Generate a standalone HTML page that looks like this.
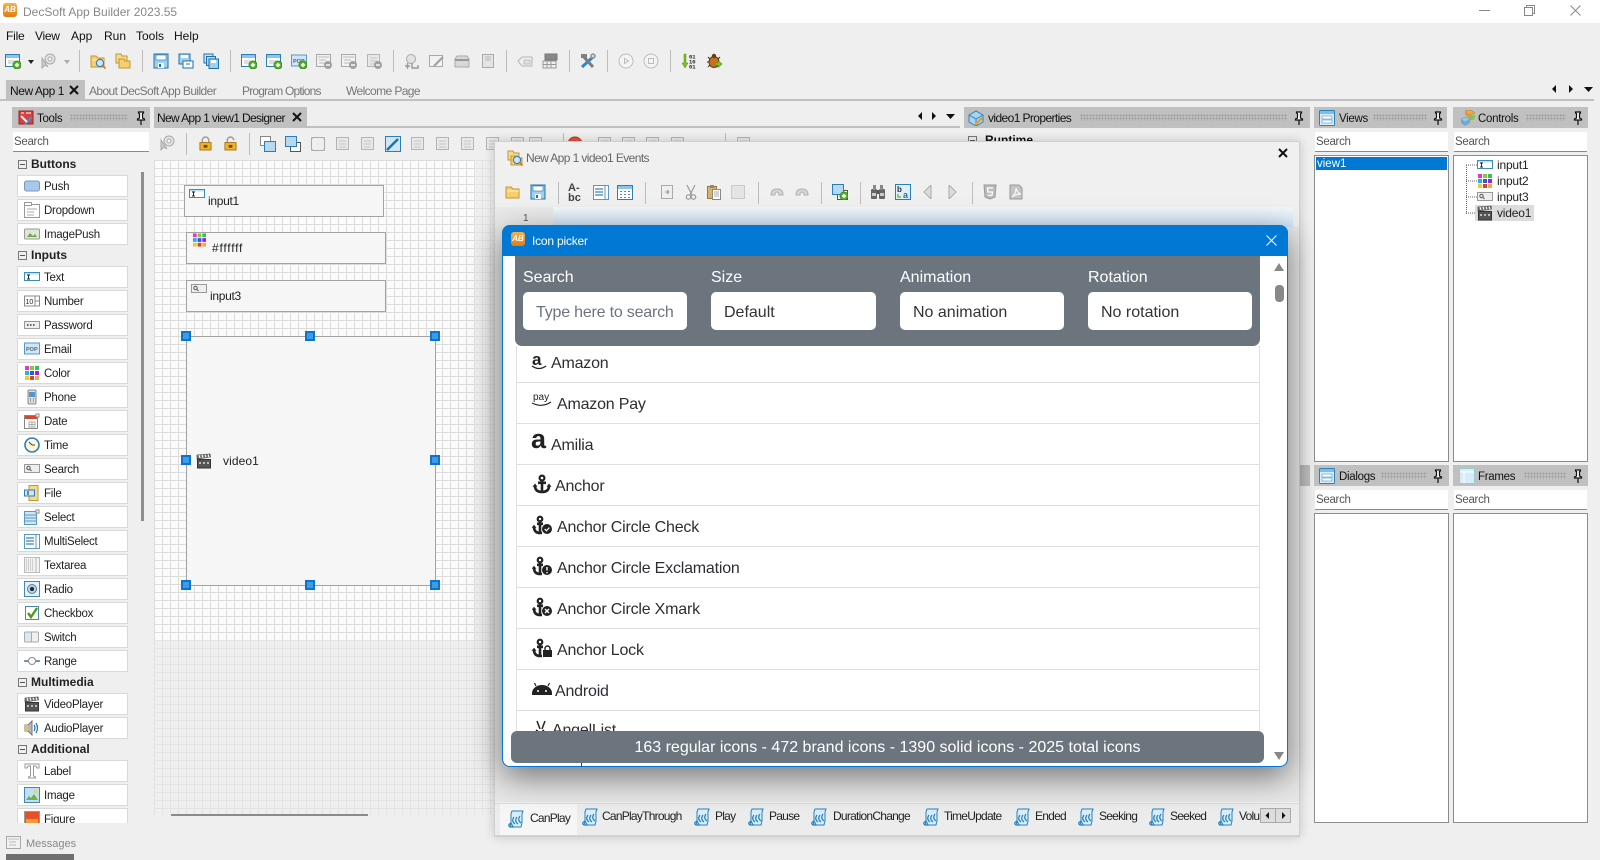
<!DOCTYPE html>
<html><head><meta charset="utf-8"><title>DecSoft App Builder</title>
<style>
html,body{margin:0;padding:0;width:1600px;height:860px;overflow:hidden;background:#efefef;font-family:"Liberation Sans",sans-serif;color:#222}
body{position:relative}
.a{position:absolute}
.t{position:absolute;white-space:nowrap;line-height:14px;font-size:12px}
svg.i{position:absolute;width:16px;height:16px;overflow:visible}
.sep{position:absolute;width:1px;background:#bdbdbd}
.ph{position:absolute;background:#c0c0c0;height:21px}
.ph2{font-size:11.5px;letter-spacing:-.3px;margin-top:1px}
.dots{position:absolute;height:7px;background-image:radial-gradient(#9c9c9c .8px,transparent 1px);background-size:3px 3px}
.search{position:absolute;background:#fff;height:19px;border-bottom:1px solid #8a8a8a;font-size:11.5px;letter-spacing:-.3px;line-height:21px;color:#555;padding-left:1px;box-sizing:content-box}
.box{position:absolute;background:#fff;border:1px solid #8c8c8c;box-sizing:border-box}
.it{position:absolute;left:17px;width:111px;height:22px;background:#fff;border:1px solid #d9d9d9;box-sizing:border-box;font-size:11.5px;line-height:20px}
.it svg{position:absolute;left:6px;top:2px;width:16px;height:16px}
.it span{position:absolute;left:26px;top:1px;letter-spacing:-.25px}
.hd{position:absolute;left:31px;font-weight:bold;font-size:12px;line-height:14px}
.mn{position:absolute;left:18px;width:9px;height:9px;border:1px solid #777;box-sizing:border-box}
.mn:after{content:"";position:absolute;left:1px;top:3px;width:5px;height:1px;background:#555}
.ctl{position:absolute;background:#f6f6f6;border:1px solid #a2a2a2;box-sizing:border-box;font-size:12px}
.hdl{position:absolute;width:10px;height:10px;background:#3f9ae8;border:2px solid #0b74cf;box-sizing:border-box}
.lbl{position:absolute;color:#fff;font-size:16px;line-height:20px;top:268px;white-space:nowrap}
.inp{position:absolute;top:292px;width:164px;height:38px;background:#fff;border-radius:5px;font-size:16px;line-height:42px;box-sizing:border-box;padding-left:13px;color:#333;white-space:nowrap}
.row{position:absolute;left:516px;width:744px;height:41px;border-bottom:1px solid #dfdfdf;box-sizing:border-box;background:#fff;font-size:16px;color:#2b2f33}
.row span{position:absolute;top:12px;line-height:20px;white-space:nowrap;letter-spacing:-.2px}
.row svg{position:absolute;left:16px;top:9px;width:22px;height:20px;overflow:visible}
.ev{position:absolute;top:809px;font-size:12px;line-height:14px;white-space:nowrap;letter-spacing:-.75px}
.evi{position:absolute;top:808px;width:18px;height:18px;overflow:visible}
</style></head><body>
<svg width="0" height="0" style="position:absolute">
<defs>
<symbol id="win" viewBox="0 0 16 16"><rect x=".5" y="1.500" width="14" height="12" fill="#fff" stroke="#2a7fb8"/><rect x="1" y="2" width="13" height="3" fill="#8cc4ea"/><path d="M3 8h7M3 10h7" stroke="#bbb"/></symbol>
<symbol id="plus" viewBox="0 0 16 16"><circle cx="12" cy="12" r="4" fill="#5cb531" stroke="#3a8a1c"/><path d="M10 12h4M12 10v4" stroke="#fff" stroke-width="1.400"/></symbol>
<symbol id="minus" viewBox="0 0 16 16"><circle cx="12" cy="12" r="4" fill="#a0a0a0"/><path d="M10 12h4" stroke="#fff" stroke-width="1.400"/></symbol>
<symbol id="fold" viewBox="0 0 16 16"><path d="M1 3h5l2 2h6v9H1z" fill="#f6cf6e" stroke="#c29635"/><path d="M2 7h12" stroke="#fff0bd"/></symbol>
<symbol id="fold2" viewBox="0 0 16 16"><path d="M1 1h5l1 2h5v7H1z" fill="#f6d98a" stroke="#c29635"/><path d="M4 6h5l1 2h5v7H4z" fill="#f6cf6e" stroke="#c29635"/></symbol>
<symbol id="lens" viewBox="0 0 16 16"><circle cx="10" cy="10" r="3.600" fill="#cfe6f8" stroke="#3c84b8" stroke-width="1.200"/><path d="M12.500 12.500l3 3" stroke="#d07a30" stroke-width="1.800"/></symbol>
<symbol id="save" viewBox="0 0 16 16"><path d="M1 1h14v14H1z" fill="#9fd0f0" stroke="#1d72aa"/><rect x="3" y="2" width="10" height="5" fill="#fff" stroke="#1d72aa" stroke-width=".6"/><rect x="5" y="10" width="6" height="5" fill="#fff"/><rect x="6" y="11" width="2" height="3" fill="#1d72aa"/></symbol>
<symbol id="save2" viewBox="0 0 16 16"><path d="M1 1h11v10H1z" fill="#9fd0f0" stroke="#1d72aa"/><rect x="3" y="2" width="7" height="3" fill="#fff"/><rect x="5" y="8" width="10" height="7" fill="#fff" stroke="#1d72aa"/><path d="M8 11h4" stroke="#1d72aa"/></symbol>
<symbol id="save3" viewBox="0 0 16 16"><rect x="1" y="1" width="9" height="9" fill="#cfe6f8" stroke="#1d72aa"/><rect x="3.500" y="3.500" width="9" height="9" fill="#b3d9f2" stroke="#1d72aa"/><rect x="6" y="6" width="9.500" height="9.500" fill="#9fd0f0" stroke="#1d72aa"/><rect x="8" y="7" width="5" height="3" fill="#fff"/></symbol>
<symbol id="gwin" viewBox="0 0 16 16"><rect x=".5" y="1.500" width="14" height="12" fill="#f2f2f2" stroke="#a8a8a8"/><path d="M2 4h11M3 7h7M3 10h7" stroke="#bcbcbc"/></symbol>
<symbol id="gbox" viewBox="0 0 16 16"><rect x="1.500" y="1.500" width="12" height="12" fill="#e8e8e8" stroke="#b4b4b4"/><path d="M4 5h7M4 8h7M4 11h7" stroke="#c6c6c6"/></symbol>
<symbol id="gdoc" viewBox="0 0 16 16"><rect x=".5" y="2.500" width="13" height="11" fill="#f2f2f2" stroke="#aaa"/><path d="M5 13L14 4" stroke="#a0a0a0" stroke-width="2"/></symbol>
<symbol id="gcase" viewBox="0 0 16 16"><path d="M1 14V6l2-3h10l2 3v8z" fill="#d8d8d8" stroke="#aaa"/><path d="M1 7h14" stroke="#999" stroke-width="2"/></symbol>
<symbol id="gside" viewBox="0 0 16 16"><rect x="2.500" y="1.500" width="11" height="13" fill="#e4e4e4" stroke="#aaa"/><rect x="5" y="3" width="6" height="5" fill="#cfcfcf"/></symbol>
<symbol id="gback" viewBox="0 0 16 16"><path d="M1 8l4-4h10v9H5z" fill="#efefef" stroke="#b4b4b4"/><rect x="7" y="7" width="6" height="4" fill="#e0e0e0" stroke="#c0c0c0"/></symbol>
<symbol id="gtab" viewBox="0 0 16 16"><rect x="3" y="1" width="12" height="6" fill="#888" stroke="#777"/><path d="M1 8h13v7H1zM1 11.500h13M5 8v7M9 8v7" fill="#eee" stroke="#999"/></symbol>
<symbol id="gcirc" viewBox="0 0 16 16"><circle cx="8" cy="8" r="7" fill="#f4f4f4" stroke="#bcbcbc"/><path d="M6.500 5.500v5l4-2.500z" fill="none" stroke="#bbb"/></symbol>
<symbol id="gstop" viewBox="0 0 16 16"><circle cx="8" cy="8" r="7" fill="#f4f4f4" stroke="#bcbcbc"/><rect x="5.500" y="5.500" width="5" height="5" fill="none" stroke="#bbb"/></symbol>
<symbol id="ghost" viewBox="0 0 16 16"><circle cx="9" cy="6" r="5" fill="#e4e4e4" stroke="#aaa"/><circle cx="9" cy="6" r="2" fill="#f4f4f4" stroke="#aaa"/><path d="M1 5v10l3-3 3 2z" fill="#ccc" stroke="#aaa"/></symbol>
<symbol id="ggear" viewBox="0 0 16 16"><circle cx="7" cy="6" r="4.500" fill="#e2e2e2" stroke="#aaa"/><path d="M1 13h5M3.500 10v6M8 10v5h6v-3" fill="none" stroke="#999" stroke-width="1.400"/></symbol>
<symbol id="tools" viewBox="0 0 16 16"><path d="M2 14L13 4" stroke="#2f86c4" stroke-width="3"/><path d="M3 3l10 11" stroke="#7c7c7c" stroke-width="3"/><path d="M1 1h6v4H1z" fill="#808080"/><circle cx="13" cy="3" r="2.800" fill="#999"/><circle cx="13" cy="3" r="1" fill="#efefef"/></symbol>
<symbol id="bin" viewBox="0 0 16 16"><path d="M3 1h2v9h2l-3 5-3-5h2z" fill="#83bf1e" stroke="#4f8a10" stroke-width=".5"/><text x="8" y="5.500" font-size="5.500" font-weight="bold" font-family="Liberation Mono" fill="#222">01</text><text x="8" y="10.500" font-size="5.500" font-weight="bold" font-family="Liberation Mono" fill="#222">10</text><text x="8" y="15.500" font-size="5.500" font-weight="bold" font-family="Liberation Mono" fill="#222">01</text></symbol>
<symbol id="bug" viewBox="0 0 16 16"><ellipse cx="7" cy="9" rx="5" ry="5.500" fill="#c9701d" stroke="#6a3a10"/><circle cx="7" cy="3" r="2.200" fill="#6a3a10"/><path d="M1 4l2 2M13 4l-2 2M0 9h2M1 14l2-2" stroke="#333"/><path d="M8 10h3V7.500l4 3.500-4 3.500V12H8z" fill="#7cc92c" stroke="#4d8a14" stroke-width=".6"/></symbol>
<symbol id="lock" viewBox="0 0 14 16"><path d="M3.500 8V4.500a3.500 3.500 0 0 1 7 0V8" fill="none" stroke="#999" stroke-width="1.500"/><rect x="1" y="7" width="12" height="8" fill="#f0b429" stroke="#a87412"/><rect x="5" y="9.500" width="4" height="3" fill="#6a4a10"/></symbol>
<symbol id="unlock" viewBox="0 0 14 16"><path d="M3.500 7V4.500a3.500 3.500 0 0 1 7 0" fill="none" stroke="#999" stroke-width="1.500"/><rect x="1" y="7" width="12" height="8" fill="#f0b429" stroke="#a87412"/><rect x="5" y="9.500" width="4" height="3" fill="#6a4a10"/></symbol>
<symbol id="back" viewBox="0 0 16 16"><rect x=".5" y=".5" width="10" height="9" fill="#fff" stroke="#888"/><rect x="4.500" y="5.500" width="11" height="10" fill="#b8d8f0" stroke="#2a7fb8"/></symbol>
<symbol id="front" viewBox="0 0 16 16"><rect x="5.500" y="6.500" width="10" height="9" fill="#fff" stroke="#555"/><rect x=".5" y=".5" width="11" height="10" fill="#b8d8f0" stroke="#2a7fb8"/></symbol>
<symbol id="gsq" viewBox="0 0 16 16"><rect x="1.500" y="1.500" width="13" height="13" fill="#efefef" stroke="#aaa"/><path d="M1 1h2v2H1zM13 1h2v2h-2zM1 13h2v2H1zM13 13h2v2h-2z" fill="#bbb"/></symbol>
<symbol id="pen" viewBox="0 0 16 16"><rect x=".5" y=".5" width="15" height="15" fill="#cfe6f8" stroke="#2a7fb8"/><path d="M2 14L13 3" stroke="#1d72aa" stroke-width="2.500"/></symbol>
<symbol id="pin" viewBox="0 0 12 14"><path d="M3.500 1h5v1l-1 .5V7l2 1v1h-7V8l2-1V2.500l-1-.5zM6 9v5" fill="#fff" stroke="#111" stroke-width="1.200"/></symbol>
<symbol id="vid" viewBox="0 0 16 16"><rect x="1.500" y="6.500" width="13" height="8.500" fill="#555" stroke="#333"/><path d="M1 2l13-1 .5 3L1 6z" fill="#777" stroke="#333" stroke-width=".6"/><path d="M3 2l1 3M6 1.700l1 3M9 1.500l1 3M12 1.300l1 3" stroke="#fff"/><path d="M3 10h2M7 10h2M11 10h2" stroke="#ddd" stroke-width="1.500"/></symbol>
<symbol id="push" viewBox="0 0 16 16"><rect x=".5" y="3" width="15" height="10" rx="2" fill="#a8c8ec" stroke="#7d99b8"/></symbol>
<symbol id="drop" viewBox="0 0 16 16"><rect x=".5" y="2.500" width="15" height="13" fill="#fff" stroke="#999"/><rect x=".5" y=".5" width="7" height="3" fill="#fff" stroke="#999"/><path d="M3 7h10M3 10h7M3 13h7" stroke="#aaa"/></symbol>
<symbol id="imgp" viewBox="0 0 16 16"><rect x=".5" y="3" width="15" height="10" rx="1" fill="#dfe8d6" stroke="#999"/><path d="M3 11l3-4 3 3 2-2 2 3z" fill="#72a84a"/></symbol>
<symbol id="txt" viewBox="0 0 16 16"><rect x=".5" y="3.500" width="15" height="8" fill="#fff" stroke="#3a8fb8"/><rect x="1" y="4" width="14" height="1.500" fill="#b8e0f0"/><path d="M3 6h3M4.500 6v4M3 10h3" stroke="#222"/></symbol>
<symbol id="num" viewBox="0 0 16 16"><rect x=".5" y="3" width="15" height="10" fill="#fff" stroke="#888"/><path d="M11 3v10M11 8h4" stroke="#888"/><text x="1.500" y="11" font-size="7" font-family="Liberation Sans" fill="#223">10</text></symbol>
<symbol id="pass" viewBox="0 0 16 16"><rect x=".5" y="4.500" width="15" height="7" fill="#eee" stroke="#999"/><path d="M3 8h1.500M6 8h1.500M9 8h1.500" stroke="#333" stroke-width="1.500"/></symbol>
<symbol id="mail" viewBox="0 0 16 16"><rect x=".5" y="2" width="15" height="11" fill="#cfe6f8" stroke="#5a9ac0"/><text x="2" y="10" font-size="5.500" font-weight="bold" font-family="Liberation Sans" fill="#567">POP</text></symbol>
<symbol id="col" viewBox="0 0 16 16"><rect x="1" y="1" width="4" height="4" fill="#e635c8"/><rect x="6" y="1" width="4" height="4" fill="#8bc34a"/><rect x="11" y="1" width="4" height="4" fill="#34c05a"/><rect x="1" y="6" width="4" height="4" fill="#33aaf0"/><rect x="6" y="6" width="4" height="4" fill="#3059d6"/><rect x="11" y="6" width="4" height="4" fill="#a020e0"/><rect x="1" y="11" width="4" height="4" fill="#f2c93a"/><rect x="6" y="11" width="4" height="4" fill="#d84430"/><rect x="11" y="11" width="4" height="4" fill="#f0a948"/></symbol>
<symbol id="ph" viewBox="0 0 16 16"><rect x="4" y="1" width="8" height="14" rx="1" fill="#ddd" stroke="#888"/><rect x="5" y="3" width="6" height="5" fill="#4f97d4"/><path d="M6 10h1M9 10h1M6 12h1M9 12h1" stroke="#666"/></symbol>
<symbol id="dat" viewBox="0 0 16 16"><rect x=".5" y="2.500" width="13" height="13" fill="#fff" stroke="#888"/><rect x="1" y="3" width="12" height="3" fill="#d5482e"/><path d="M5 9h6v5H5zM5 11.500h6M8 9v5" fill="none" stroke="#aaa"/><rect x="12" y="1" width="3" height="3" fill="#fff" stroke="#888"/></symbol>
<symbol id="clk" viewBox="0 0 16 16"><circle cx="8" cy="8" r="7" fill="#fdf6d6" stroke="#2d7dbd" stroke-width="1.600"/><path d="M8 8L5 5M8 8h3" stroke="#444"/></symbol>
<symbol id="sea" viewBox="0 0 16 16"><rect x=".5" y="3.500" width="15" height="8" fill="#eee" stroke="#999"/><circle cx="4.500" cy="7" r="1.700" fill="none" stroke="#555"/><path d="M6 8.500l1.500 1.500" stroke="#555"/></symbol>
<symbol id="fil" viewBox="0 0 16 16"><path d="M5 .5h9v15H5z" fill="#f6d98a" stroke="#c29635"/><rect x=".5" y="5" width="10" height="6" fill="#cfe6f8" stroke="#2a7fb8"/><path d="M3 7h2M3 9h2" stroke="#222"/></symbol>
<symbol id="sel" viewBox="0 0 16 16"><rect x=".5" y="2.500" width="12" height="13" fill="#cfe6f8" stroke="#5a9ac0"/><path d="M1 6h11M1 9h11M1 12h11" stroke="#5a9ac0"/><rect x="12" y="1" width="3" height="3" fill="#fff" stroke="#888"/></symbol>
<symbol id="msel" viewBox="0 0 16 16"><rect x=".5" y="1.500" width="15" height="14" fill="#fff" stroke="#5a9ac0"/><path d="M12 2v13" stroke="#5a9ac0"/><path d="M2 5h8M2 8h8M2 11h8" stroke="#5a9ac0" stroke-width="1.400"/></symbol>
<symbol id="cal" viewBox="0 0 16 16"><rect x=".5" y="1.500" width="15" height="14" fill="#fff" stroke="#2a7fb8"/><rect x="1" y="2" width="14" height="3" fill="#8cc4ea"/><path d="M3 7h2v1H3zM7 7h2v1H7zM11 7h2v1h-2zM3 10h2v1H3zM7 10h2v1H7zM11 10h2v1h-2zM3 13h2v1H3zM7 13h2v1H7zM11 13h2v1h-2z" fill="#5a8ab0"/></symbol>
<symbol id="tarea" viewBox="0 0 16 16"><rect x=".5" y=".5" width="15" height="15" fill="#f2f2f2" stroke="#bbb"/><path d="M12 1v14" stroke="#bbb"/><path d="M2 3h8M2 5h8M2 7h8M2 9h8M2 11h8M2 13h8" stroke="#aaa" stroke-dasharray="1 1"/></symbol>
<symbol id="rad" viewBox="0 0 16 16"><rect x=".5" y=".5" width="15" height="15" fill="#e6f0f8" stroke="#4a85b0"/><circle cx="8" cy="8" r="4.500" fill="#b8cfe6" stroke="#4a85b0"/><circle cx="8" cy="8" r="2" fill="#222"/></symbol>
<symbol id="chk" viewBox="0 0 16 16"><rect x="1.500" y="1.500" width="13" height="13" fill="#fff" stroke="#4a85b0"/><path d="M4 8l3 4 6-9" fill="none" stroke="#4b9a1a" stroke-width="2.400"/></symbol>
<symbol id="sw" viewBox="0 0 16 16"><rect x=".5" y="3" width="14" height="10" rx="1" fill="#f0f0f0" stroke="#aaa"/><path d="M7.500 3v10" stroke="#aaa"/><rect x="1" y="3.500" width="6" height="9" fill="#dde8f2"/></symbol>
<symbol id="ran" viewBox="0 0 16 16"><path d="M0 8h16" stroke="#6a9ac0" stroke-width="2"/><circle cx="8" cy="8" r="3.500" fill="#fff" stroke="#888"/></symbol>
<symbol id="aud" viewBox="0 0 16 16"><path d="M1 5h3l4-4v14l-4-4H1z" fill="#b8b8b8" stroke="#777"/><rect x="1" y="5" width="3" height="6" fill="#e6c34a"/><path d="M10 5q2 3 0 6M12 3q3 5 0 10" fill="none" stroke="#2a7fb8" stroke-width="1.300"/></symbol>
<symbol id="lab" viewBox="0 0 16 16"><path d="M1 1h14v4h-2l-1-2H9.500v10l2 1v1h-7v-1l2-1V3H4L3 5H1z" fill="#fff" stroke="#999"/></symbol>
<symbol id="img" viewBox="0 0 16 16"><rect x=".5" y=".5" width="15" height="15" fill="#bfe0f4" stroke="#4a85b0"/><path d="M2 13l3-4 2 2 3-4 4 6z" fill="#6cb33f"/><circle cx="11.500" cy="4.500" r="1.500" fill="#f3d23e"/></symbol>
<symbol id="fig" viewBox="0 0 16 16"><rect x=".5" y=".5" width="15" height="15" fill="#e8502a" stroke="#999"/><rect x="2" y="8" width="12" height="6" fill="#f0a030"/></symbol>
<symbol id="tl" viewBox="0 0 16 16"><rect x="1" y="1" width="14" height="13" fill="#d94040" stroke="#a52020"/><path d="M3 3h3M8 3h5" stroke="#fff"/><path d="M7 14L14 7" stroke="#3c8ed0" stroke-width="2.500"/><path d="M3 6l6 6" stroke="#eee" stroke-width="2"/></symbol>
<symbol id="prop" viewBox="0 0 16 16"><path d="M1 5l7-4 7 4v7l-7 4-7-4z" fill="#a8d4ee" stroke="#2d84b8"/><path d="M1 5l7 4 7-4M8 9v7" fill="none" stroke="#2d84b8"/><path d="M7 15L14 8" stroke="#e59c28" stroke-width="2"/></symbol>
<symbol id="ctrl" viewBox="0 0 16 16"><path d="M5 1l6-1 4 3-6 2z" fill="#f0a848" stroke="#b47a28" stroke-width=".5"/><path d="M9 5h6v4l-6 2z" fill="#8cc050"/><path d="M1 9l5-2 4 2-5 3z" fill="#9cc8ec" stroke="#5a94c0" stroke-width=".5"/><path d="M1 9v4l4 3v-4zM5 12v4l5-3V9z" fill="#6ea8d8"/><path d="M5 1v4l4 3V5z" fill="#e89838"/></symbol>
<symbol id="vw" viewBox="0 0 16 16"><rect x=".5" y=".5" width="15" height="15" rx="1" fill="#dcecf8" stroke="#2a84bc"/><rect x="1" y="1" width="14" height="3" fill="#7fbde6"/><rect x="3" y="6" width="10" height="3" fill="#fff" stroke="#2a84bc" stroke-width=".5"/><rect x="3" y="10" width="10" height="3" fill="#fff" stroke="#2a84bc" stroke-width=".5"/></symbol>
<symbol id="frm" viewBox="0 0 16 16"><rect x=".5" y=".5" width="15" height="15" fill="#d6ecf8" stroke="#9cc"/><path d="M1 4h14M5 4v11" stroke="#fff"/></symbol>
<symbol id="scr" viewBox="0 0 18 18"><path d="M5 1h11l-1 3v9l-1 4H3l1-4V4z" fill="#d8eefc" stroke="#2681bd"/><path d="M3 17q-3-2 1-4l2 4zM7 7q-3 4 1 7M10 7q-3 4 1 7M13 6q-3 4 1 7" fill="none" stroke="#2681bd" stroke-width="1.200"/></symbol>
<symbol id="sciss" viewBox="0 0 16 16"><path d="M4 1l5 10M12 1L7 11" stroke="#999" stroke-width="1.200"/><circle cx="5.500" cy="13" r="2.200" fill="none" stroke="#999" stroke-width="1.200"/><circle cx="10.500" cy="13" r="2.200" fill="none" stroke="#999" stroke-width="1.200"/></symbol>
<symbol id="clip" viewBox="0 0 16 16"><rect x="1.500" y="2.500" width="9" height="12" fill="#d9b36c" stroke="#9c7a36"/><rect x="6.500" y="5.500" width="8" height="10" fill="#fff" stroke="#888"/><path d="M8 8h5M8 10h5M8 12h5" stroke="#aaa"/><rect x="4" y="1" width="4" height="3" fill="#888"/></symbol>
<symbol id="dotb" viewBox="0 0 16 16"><rect x="1.500" y="1.500" width="13" height="13" fill="#e4e4e4" stroke="#aaa" stroke-dasharray="1 1"/></symbol>
<symbol id="gpaste" viewBox="0 0 16 16"><rect x="2.500" y="1.500" width="11" height="13" fill="#eee" stroke="#aaa"/><path d="M6 8h4M8 6l2 2-2 2" fill="none" stroke="#999"/></symbol>
<symbol id="undo" viewBox="0 0 16 16"><path d="M2 11q0-6 6-6t6 6h-4q0-3-2-3t-2 3z" fill="#d6d6d6" stroke="#b0b0b0"/></symbol>
<symbol id="binoc" viewBox="0 0 16 16"><rect x="1" y="5" width="6" height="10" rx="1" fill="#666"/><rect x="9" y="5" width="6" height="10" rx="1" fill="#666"/><rect x="3" y="1" width="3" height="5" fill="#888"/><rect x="10" y="1" width="3" height="5" fill="#888"/><rect x="7" y="6" width="2" height="4" fill="#555"/><rect x="2" y="9" width="4" height="3" fill="#ccc"/><rect x="10" y="9" width="4" height="3" fill="#ccc"/></symbol>
<symbol id="rep" viewBox="0 0 16 16"><rect x=".5" y=".5" width="15" height="15" fill="#e0eef8" stroke="#2a7fb8"/><text x="2" y="8" font-size="8" font-weight="bold" font-family="Liberation Sans" fill="#234">b</text><text x="8" y="14" font-size="9" font-weight="bold" font-family="Liberation Sans" fill="#1d72aa">a</text><path d="M3 10v3h3" fill="none" stroke="#4b9a1a"/></symbol>
<symbol id="html" viewBox="0 0 16 16"><path d="M2 1h12l-1 12-5 2-5-2z" fill="#bbb" stroke="#999"/><path d="M11 4H5.500L6 8h4.500l-.5 3-2 .6-2-.6" fill="none" stroke="#fff" stroke-width="1.300"/></symbol>
<symbol id="pdf" viewBox="0 0 16 16"><path d="M2 1h9l3 3v11H2z" fill="#c4c4c4" stroke="#999"/><path d="M4 13q4-3 4-9 1 5 5 6-5 0-9 3z" fill="none" stroke="#fff"/></symbol>
<symbol id="anc" viewBox="0 0 20 20"><circle cx="10" cy="4" r="2.400" fill="none" stroke="#222" stroke-width="2.200"/><path d="M10 6v11M6 8.800h8" stroke="#222" stroke-width="2.600"/><path d="M3 12.500q.5 5.500 7 5.500t7-5.500" fill="none" stroke="#222" stroke-width="2.600"/><path d="M.5 12.800h5L3 9.500zM14.500 12.800h5L17 9.500z" fill="#222"/></symbol>
<symbol id="anc2" viewBox="0 0 20 20"><circle cx="8" cy="4" r="2.300" fill="none" stroke="#222" stroke-width="2.200"/><path d="M8 6v11M5 8.800h6" stroke="#222" stroke-width="2.600"/><path d="M2 12.500q.5 5.500 6 5.500h2" fill="none" stroke="#222" stroke-width="2.600"/><path d="M-.5 12.800h5L2 9.800z" fill="#222"/><circle cx="15" cy="14" r="5" fill="#222"/></symbol>
</defs></svg>

<!-- title bar -->
<div class="a" style="left:0;top:0;width:1600px;height:23px;background:#fff"></div>
<div class="a" style="left:3px;top:3px;width:14px;height:14px;border-radius:3px;background:linear-gradient(#f6b24a,#e07c10);color:#fff;font-size:8px;font-weight:bold;font-style:italic;line-height:14px;text-align:center">AB</div>
<div class="t" style="left:23px;top:5px;color:#888">DecSoft App Builder 2023.55</div>
<div class="a" style="left:1479px;top:10px;width:11px;height:1px;background:#888"></div>
<svg class="a" style="left:1524px;top:5px" width="11" height="11"><path d="M.5 2.500h8v8h-8zM2.500 2.500v-2h8v8h-2" fill="none" stroke="#888"/></svg>
<svg class="a" style="left:1570px;top:5px" width="11" height="11"><path d="M.5.500l10 10M10.500.500l-10 10" stroke="#888"/></svg>

<!-- menu -->
<div class="t" style="left:6px;top:29px;color:#111;letter-spacing:-.2px">File</div>
<div class="t" style="left:35px;top:29px;color:#111;letter-spacing:-.3px">View</div>
<div class="t" style="left:71px;top:29px;color:#111">App</div>
<div class="t" style="left:104px;top:29px;color:#111">Run</div>
<div class="t" style="left:136px;top:29px;color:#111">Tools</div>
<div class="t" style="left:174px;top:29px;color:#111">Help</div>

<!-- main toolbar -->
<svg class="i" style="left:5px;top:53px"><use href="#win"/><use href="#plus"/></svg>
<div class="a" style="left:28px;top:60px;border:3px solid transparent;border-top:4px solid #222"></div>
<svg class="i" style="left:41px;top:53px"><use href="#ghost"/></svg>
<div class="a" style="left:64px;top:60px;border:3px solid transparent;border-top:4px solid #aaa"></div>
<div class="sep" style="left:79px;top:50px;height:22px"></div>
<svg class="i" style="left:90px;top:53px"><use href="#fold"/><use href="#lens"/></svg>
<svg class="i" style="left:115px;top:53px"><use href="#fold2"/></svg>
<div class="sep" style="left:142px;top:50px;height:22px"></div>
<svg class="i" style="left:153px;top:53px"><use href="#save"/></svg>
<svg class="i" style="left:178px;top:53px"><use href="#save2"/></svg>
<svg class="i" style="left:203px;top:53px"><use href="#save3"/></svg>
<div class="sep" style="left:230px;top:50px;height:22px"></div>
<svg class="i" style="left:241px;top:53px"><use href="#win"/><use href="#plus"/></svg>
<svg class="i" style="left:266px;top:53px"><use href="#win"/><use href="#plus"/></svg>
<svg class="i" style="left:291px;top:53px"><use href="#mail"/><use href="#plus"/></svg>
<svg class="i" style="left:316px;top:53px"><use href="#gwin"/><use href="#minus"/></svg>
<svg class="i" style="left:341px;top:53px"><use href="#gwin"/><use href="#minus"/></svg>
<svg class="i" style="left:366px;top:53px"><use href="#gbox"/><use href="#minus"/></svg>
<div class="sep" style="left:393px;top:50px;height:22px"></div>
<svg class="i" style="left:404px;top:53px"><use href="#ggear"/></svg>
<svg class="i" style="left:429px;top:53px"><use href="#gdoc"/></svg>
<svg class="i" style="left:454px;top:53px"><use href="#gcase"/></svg>
<svg class="i" style="left:480px;top:53px"><use href="#gside"/></svg>
<div class="sep" style="left:506px;top:50px;height:22px"></div>
<svg class="i" style="left:517px;top:53px"><use href="#gback"/></svg>
<svg class="i" style="left:542px;top:53px"><use href="#gtab"/></svg>
<div class="sep" style="left:569px;top:50px;height:22px"></div>
<svg class="i" style="left:580px;top:53px"><use href="#tools"/></svg>
<div class="sep" style="left:607px;top:50px;height:22px"></div>
<svg class="i" style="left:618px;top:53px"><use href="#gcirc"/></svg>
<svg class="i" style="left:643px;top:53px"><use href="#gstop"/></svg>
<div class="sep" style="left:670px;top:50px;height:22px"></div>
<svg class="i" style="left:681px;top:53px"><use href="#bin"/></svg>
<svg class="i" style="left:707px;top:53px"><use href="#bug"/></svg>

<!-- top tabs -->
<div class="a" style="left:6px;top:80px;width:79px;height:19px;background:#c0c0c0"></div>
<div class="t" style="left:10px;top:84px;color:#111;letter-spacing:-.45px">New App 1</div>
<svg class="a" style="left:69px;top:85px" width="10" height="10"><path d="M1 1l8 8M9 1l-8 8" stroke="#111" stroke-width="2"/></svg>
<div class="t" style="left:89px;top:84px;color:#777;letter-spacing:-.6px">About DecSoft App Builder</div>
<div class="t" style="left:242px;top:84px;color:#777;letter-spacing:-.8px">Program Options</div>
<div class="t" style="left:346px;top:84px;color:#777;letter-spacing:-.6px">Welcome Page</div>
<div class="a" style="left:0;top:99px;width:1594px;height:2px;background:#c0c0c0"></div>
<svg class="a" style="left:1551px;top:84px" width="44" height="10"><path d="M5 1v8L1 5zM18 1v8l4-4zM33 3h9l-4.500 5z" fill="#111"/></svg>

<!-- tools panel -->
<div class="ph" style="left:12px;top:107px;width:138px"></div>
<svg class="i" style="left:18px;top:110px"><use href="#tl"/></svg>
<div class="t ph2" style="left:37px;top:111px;color:#111">Tools</div>
<div class="dots" style="left:70px;top:114px;width:58px"></div>
<svg class="a" style="left:135px;top:111px" width="12" height="14"><use href="#pin"/></svg>
<div class="search" style="left:13px;top:132px;width:135px">Search</div>

<div class="mn" style="top:160px"></div><div class="hd" style="top:157px">Buttons</div>
<div class="it" style="top:175px"><svg><use href="#push"/></svg><span>Push</span></div>
<div class="it" style="top:199px"><svg><use href="#drop"/></svg><span>Dropdown</span></div>
<div class="it" style="top:223px"><svg><use href="#imgp"/></svg><span>ImagePush</span></div>
<div class="mn" style="top:251px"></div><div class="hd" style="top:248px">Inputs</div>
<div class="it" style="top:266px"><svg><use href="#txt"/></svg><span>Text</span></div>
<div class="it" style="top:290px"><svg><use href="#num"/></svg><span>Number</span></div>
<div class="it" style="top:314px"><svg><use href="#pass"/></svg><span>Password</span></div>
<div class="it" style="top:338px"><svg><use href="#mail"/></svg><span>Email</span></div>
<div class="it" style="top:362px"><svg><use href="#col"/></svg><span>Color</span></div>
<div class="it" style="top:386px"><svg><use href="#ph"/></svg><span>Phone</span></div>
<div class="it" style="top:410px"><svg><use href="#dat"/></svg><span>Date</span></div>
<div class="it" style="top:434px"><svg><use href="#clk"/></svg><span>Time</span></div>
<div class="it" style="top:458px"><svg><use href="#sea"/></svg><span>Search</span></div>
<div class="it" style="top:482px"><svg><use href="#fil"/></svg><span>File</span></div>
<div class="it" style="top:506px"><svg><use href="#sel"/></svg><span>Select</span></div>
<div class="it" style="top:530px"><svg><use href="#msel"/></svg><span>MultiSelect</span></div>
<div class="it" style="top:554px"><svg><use href="#tarea"/></svg><span>Textarea</span></div>
<div class="it" style="top:578px"><svg><use href="#rad"/></svg><span>Radio</span></div>
<div class="it" style="top:602px"><svg><use href="#chk"/></svg><span>Checkbox</span></div>
<div class="it" style="top:626px"><svg><use href="#sw"/></svg><span>Switch</span></div>
<div class="it" style="top:650px"><svg><use href="#ran"/></svg><span>Range</span></div>
<div class="mn" style="top:678px"></div><div class="hd" style="top:675px">Multimedia</div>
<div class="it" style="top:693px"><svg><use href="#vid"/></svg><span>VideoPlayer</span></div>
<div class="it" style="top:717px"><svg><use href="#aud"/></svg><span>AudioPlayer</span></div>
<div class="mn" style="top:745px"></div><div class="hd" style="top:742px">Additional</div>
<div class="it" style="top:760px"><svg><use href="#lab"/></svg><span>Label</span></div>
<div class="it" style="top:784px"><svg><use href="#img"/></svg><span>Image</span></div>
<div class="it" style="top:808px;height:15px;overflow:hidden;border-bottom:0"><svg><use href="#fig"/></svg><span>Figure</span></div>
<div class="a" style="left:141px;top:172px;width:3px;height:349px;background:#8e8e8e"></div>
<svg class="i" style="left:6px;top:835px"><use href="#gwin"/></svg>
<div class="t" style="left:26px;top:837px;color:#888;font-size:11px">Messages</div>
<div class="a" style="left:6px;top:854px;width:68px;height:6px;background:#6f6f6f"></div>

<!-- designer -->
<div class="a" style="left:154px;top:107px;width:153px;height:20px;background:#c0c0c0"></div>
<div class="t" style="left:157px;top:111px;color:#111;letter-spacing:-.65px">New App 1 view1 Designer</div>
<svg class="a" style="left:292px;top:112px" width="10" height="10"><path d="M1 1l8 8M9 1l-8 8" stroke="#111" stroke-width="2"/></svg>
<div class="a" style="left:154px;top:126px;width:806px;height:2px;background:#c0c0c0"></div>
<svg class="a" style="left:917px;top:111px" width="40" height="10"><path d="M5 1v8L1 5zM15 1v8l4-4zM29 3h9l-4.500 5z" fill="#111"/></svg>

<svg class="i" style="left:160px;top:135px"><use href="#ghost"/></svg>
<div class="sep" style="left:186px;top:133px;height:22px"></div>
<svg class="a" style="left:199px;top:136px" width="13" height="15" viewBox="0 0 14 16"><use href="#lock"/></svg>
<svg class="a" style="left:224px;top:136px" width="13" height="15" viewBox="0 0 14 16"><use href="#unlock"/></svg>
<div class="sep" style="left:249px;top:133px;height:22px"></div>
<svg class="i" style="left:260px;top:136px"><use href="#back"/></svg>
<svg class="i" style="left:285px;top:136px"><use href="#front"/></svg>
<svg class="i" style="left:310px;top:136px"><use href="#gsq"/></svg>
<svg class="i" style="left:335px;top:136px"><use href="#gbox"/></svg>
<svg class="i" style="left:360px;top:136px"><use href="#gbox"/></svg>
<svg class="i" style="left:385px;top:136px"><use href="#pen"/></svg>
<svg class="i" style="left:410px;top:136px"><use href="#gbox"/></svg>
<svg class="i" style="left:435px;top:136px"><use href="#gbox"/></svg>
<svg class="i" style="left:460px;top:136px"><use href="#gbox"/></svg>
<svg class="i" style="left:485px;top:136px"><use href="#gbox"/></svg>
<div class="a" style="left:500px;top:133px;width:260px;height:8px;overflow:hidden">
<svg class="i" style="left:10px;top:3px"><use href="#gbox"/></svg>
<svg class="i" style="left:28px;top:3px"><use href="#gbox"/></svg>
<div class="sep" style="left:63px;top:0;height:8px"></div>
<svg class="i" style="left:67px;top:3px"><circle cx="8" cy="8" r="7" fill="#e8503a" stroke="#b83020"/></svg>
<svg class="i" style="left:97px;top:3px"><use href="#gbox"/></svg>
<svg class="i" style="left:121px;top:3px"><use href="#gbox"/></svg>
<svg class="i" style="left:145px;top:3px"><use href="#gbox"/></svg>
<svg class="i" style="left:170px;top:3px"><use href="#gbox"/></svg>
<div class="sep" style="left:225px;top:0;height:8px"></div>
<svg class="i" style="left:236px;top:3px"><use href="#gbox"/></svg>
</div>

<!-- canvas -->
<div class="a" style="left:154px;top:160px;width:345px;height:655px;background-color:#efefef;background-image:linear-gradient(#e3e3e3 1px,transparent 1px),linear-gradient(90deg,#e3e3e3 1px,transparent 1px);background-size:8px 8px"></div>
<div class="a" style="left:154px;top:160px;width:320px;height:480px;background-color:#fbfbfb;background-image:linear-gradient(#dcdcdc 1px,transparent 1px),linear-gradient(90deg,#dcdcdc 1px,transparent 1px);background-size:8px 8px"></div>

<div class="ctl" style="left:184px;top:185px;width:200px;height:32px"></div>
<svg class="i" style="left:189px;top:186px"><use href="#txt"/></svg>
<div class="t" style="left:208px;top:194px;letter-spacing:-.3px">input1</div>
<div class="ctl" style="left:186px;top:232px;width:200px;height:32px"></div>
<svg class="a" style="left:192px;top:232px" width="15" height="16" viewBox="0 0 16 16"><use href="#col"/></svg>
<div class="t" style="left:212px;top:241px;letter-spacing:.8px">#ffffff</div>
<div class="ctl" style="left:186px;top:280px;width:200px;height:32px"></div>
<svg class="i" style="left:191px;top:281px"><use href="#sea"/></svg>
<div class="t" style="left:210px;top:289px;letter-spacing:-.3px">input3</div>
<div class="ctl" style="left:186px;top:336px;width:250px;height:250px"></div>
<svg class="i" style="left:196px;top:453px"><use href="#vid"/></svg>
<div class="t" style="left:223px;top:454px;letter-spacing:.1px">video1</div>
<div class="hdl" style="left:181px;top:331px"></div><div class="hdl" style="left:305px;top:331px"></div><div class="hdl" style="left:430px;top:331px"></div>
<div class="hdl" style="left:181px;top:455px"></div><div class="hdl" style="left:430px;top:455px"></div>
<div class="hdl" style="left:181px;top:580px"></div><div class="hdl" style="left:305px;top:580px"></div><div class="hdl" style="left:430px;top:580px"></div>
<div class="a" style="left:171px;top:814px;width:197px;height:2px;background:#8a8a8a"></div>

<!-- properties -->
<div class="ph" style="left:964px;top:107px;width:346px"></div>
<svg class="i" style="left:968px;top:110px"><use href="#prop"/></svg>
<div class="t" style="left:988px;top:111px;color:#111;letter-spacing:-.6px">video1 Properties</div>
<div class="dots" style="left:1080px;top:114px;width:207px"></div>
<svg class="a" style="left:1293px;top:111px" width="12" height="14"><use href="#pin"/></svg>
<div class="mn" style="left:968px;top:136px"></div>
<div class="t" style="left:985px;top:133px;font-weight:bold;color:#111">Runtime</div>
<div class="a" style="left:1300px;top:465px;width:10px;height:21px;background:#bdbdbd"></div>

<!-- events dialog -->
<div class="a" style="left:494px;top:141px;width:806px;height:696px;background:#f0f0f0;border:1px solid #cfcfcf;box-sizing:border-box;box-shadow:0 0 10px rgba(0,0,0,.18)"></div>
<svg class="i" style="left:507px;top:150px"><use href="#fold2"/><use href="#lens"/></svg>
<div class="t" style="left:526px;top:151px;color:#666;letter-spacing:-.6px">New App 1 video1 Events</div>
<svg class="a" style="left:1278px;top:148px" width="10" height="10"><path d="M1 1l8 8M9 1l-8 8" stroke="#111" stroke-width="2"/></svg>
<svg class="i" style="left:505px;top:184px"><use href="#fold"/></svg>
<svg class="i" style="left:530px;top:184px"><use href="#save"/></svg>
<div class="sep" style="left:558px;top:182px;height:22px"></div>
<div class="t" style="left:568px;top:183px;font-size:11px;font-weight:bold;line-height:10px;width:14px;color:#444">A-<br>bc</div>
<svg class="i" style="left:593px;top:184px"><use href="#msel"/></svg>
<svg class="i" style="left:617px;top:184px"><use href="#cal"/></svg>
<div class="sep" style="left:645px;top:182px;height:22px"></div>
<svg class="i" style="left:659px;top:184px"><use href="#gpaste"/></svg>
<svg class="i" style="left:683px;top:184px"><use href="#sciss"/></svg>
<svg class="i" style="left:706px;top:184px"><use href="#clip"/></svg>
<svg class="i" style="left:730px;top:184px"><use href="#dotb"/></svg>
<div class="sep" style="left:758px;top:182px;height:22px"></div>
<svg class="i" style="left:769px;top:184px"><use href="#undo"/></svg>
<svg class="i" style="left:794px;top:184px"><use href="#undo"/></svg>
<div class="sep" style="left:821px;top:182px;height:22px"></div>
<svg class="i" style="left:832px;top:184px"><use href="#front"/><use href="#plus"/></svg>
<div class="sep" style="left:860px;top:182px;height:22px"></div>
<svg class="i" style="left:870px;top:184px"><use href="#binoc"/></svg>
<svg class="i" style="left:895px;top:184px"><use href="#rep"/></svg>
<svg class="a" style="left:923px;top:185px" width="9" height="14"><path d="M8 0v14L1 7z" fill="#ddd" stroke="#aaa"/></svg>
<svg class="a" style="left:948px;top:185px" width="9" height="14"><path d="M1 0v14l7-7z" fill="#ddd" stroke="#aaa"/></svg>
<div class="sep" style="left:972px;top:182px;height:22px"></div>
<svg class="i" style="left:982px;top:184px"><use href="#html"/></svg>
<svg class="i" style="left:1008px;top:184px"><use href="#pdf"/></svg>

<div class="a" style="left:495px;top:207px;width:58px;height:20px;background:#eaeaea"></div>
<div class="t" style="left:523px;top:212px;font-size:10px;color:#555">1</div>
<div class="a" style="left:553px;top:207px;width:740px;height:20px;background:linear-gradient(#f3f7fb,#cfe2f5)"></div>
<div class="a" style="left:495px;top:227px;width:804px;height:575px;background:#e8e8e8"></div>

<!-- bottom tab strip -->
<div class="a" style="left:495px;top:803px;width:804px;height:33px;background:#ececec;border-top:1px solid #dcdcdc;border-bottom:1px solid #d4d4d4;box-sizing:border-box"></div>
<div class="a" style="left:500px;top:804px;width:77px;height:31px;background:#f6f6f6"></div>
<svg class="evi" style="left:507px;top:810px"><use href="#scr"/></svg><div class="ev" style="left:530px;top:811px">CanPlay</div>
<svg class="evi" style="left:581px"><use href="#scr"/></svg><div class="ev" style="left:602px">CanPlayThrough</div>
<svg class="evi" style="left:693px"><use href="#scr"/></svg><div class="ev" style="left:715px">Play</div>
<svg class="evi" style="left:747px"><use href="#scr"/></svg><div class="ev" style="left:769px">Pause</div>
<svg class="evi" style="left:810px"><use href="#scr"/></svg><div class="ev" style="left:833px">DurationChange</div>
<svg class="evi" style="left:922px"><use href="#scr"/></svg><div class="ev" style="left:944px">TimeUpdate</div>
<svg class="evi" style="left:1013px"><use href="#scr"/></svg><div class="ev" style="left:1035px">Ended</div>
<svg class="evi" style="left:1077px"><use href="#scr"/></svg><div class="ev" style="left:1099px">Seeking</div>
<svg class="evi" style="left:1148px"><use href="#scr"/></svg><div class="ev" style="left:1170px">Seeked</div>
<svg class="evi" style="left:1217px"><use href="#scr"/></svg><div class="ev" style="left:1239px">Volu</div>
<div class="a" style="left:1260px;top:808px;width:31px;height:15px;background:#ddd;border:1px solid #aaa;box-sizing:border-box"></div>
<svg class="a" style="left:1260px;top:808px" width="31" height="15"><path d="M15.500 0v15" stroke="#aaa"/><path d="M9 4v7L5.500 7.500zM22 4v7l3.500-3.500z" fill="#111"/></svg>

<!-- icon picker -->
<div class="a" style="left:502px;top:225px;width:786px;height:542px;background:#fff;border-radius:8px;border:1px solid #0078d4;box-sizing:border-box;box-shadow:0 10px 32px rgba(0,0,0,.5);overflow:hidden"></div>
<div class="a" style="left:502px;top:225px;width:786px;height:31px;background:#0078d4;border-radius:8px 8px 0 0"></div>
<div class="a" style="left:511px;top:232px;width:14px;height:14px;border-radius:3px;background:linear-gradient(#f6b24a,#e07c10);color:#fff;font-size:8px;font-weight:bold;font-style:italic;line-height:14px;text-align:center">AB</div>
<div class="t" style="left:532px;top:234px;color:#fff;letter-spacing:-.2px">Icon picker</div>
<svg class="a" style="left:1266px;top:235px" width="11" height="11"><path d="M.5.500l10 10M10.500.500l-10 10" stroke="#fff" stroke-width="1.100"/></svg>

<div class="row" style="top:346px;height:37px"><svg viewBox="0 0 22 20" style="top:6px"><text x="0" y="13" font-size="17" font-weight="bold" font-family="Liberation Sans" fill="#222">a</text><path d="M0 14q7 5 14 0" fill="none" stroke="#222" stroke-width="1.300"/></svg><span style="left:35px;top:8px">Amazon</span></div>
<div class="row" style="top:383px"><svg viewBox="0 0 22 20" style="top:8px"><text x="1" y="9" font-size="10" font-family="Liberation Sans" fill="#222">pay</text><path d="M0 12q10 5 19-1" fill="none" stroke="#222" stroke-width="1.100"/></svg><span style="left:41px">Amazon Pay</span></div>
<div class="row" style="top:424px"><svg viewBox="0 0 22 20" style="top:8px"><text x="-1" y="16" font-size="27" font-weight="bold" font-family="Liberation Sans" fill="#222">a</text></svg><span style="left:35px">Amilia</span></div>
<div class="row" style="top:465px"><svg viewBox="0 0 20 20" style="width:20px"><use href="#anc"/></svg><span style="left:39px">Anchor</span></div>
<div class="row" style="top:506px"><svg viewBox="0 0 20 20" style="width:20px"><use href="#anc2"/><path d="M12.700 14l1.700 1.800 3-3.200" fill="none" stroke="#fff" stroke-width="1.200"/></svg><span style="left:41px">Anchor Circle Check</span></div>
<div class="row" style="top:547px"><svg viewBox="0 0 20 20" style="width:20px"><use href="#anc2"/><path d="M15 11v3.500M15 16v1.200" stroke="#fff" stroke-width="1.400"/></svg><span style="left:41px">Anchor Circle Exclamation</span></div>
<div class="row" style="top:588px"><svg viewBox="0 0 20 20" style="width:20px"><use href="#anc2"/><path d="M13 12l4 4M17 12l-4 4" stroke="#fff" stroke-width="1.300"/></svg><span style="left:41px">Anchor Circle Xmark</span></div>
<div class="row" style="top:629px"><svg viewBox="0 0 20 20" style="width:20px"><circle cx="8" cy="4" r="2.300" fill="none" stroke="#222" stroke-width="2.200"/><path d="M8 6v11M5 8.800h6" stroke="#222" stroke-width="2.600"/><path d="M2 12.500q.5 5.500 6 5.500h2" fill="none" stroke="#222" stroke-width="2.600"/><path d="M-.5 12.800h5L2 9.800z" fill="#222"/><rect x="11" y="12" width="9" height="7" fill="#222"/><path d="M13 12v-1.500a2.500 2.500 0 0 1 5 0V12" fill="none" stroke="#222" stroke-width="1.400"/></svg><span style="left:41px">Anchor Lock</span></div>
<div class="row" style="top:670px"><svg viewBox="0 0 20 20" style="width:20px"><path d="M0 16v-2a10 8 0 0 1 20 0v2z" fill="#222"/><path d="M4 7L2.500 4M16 7l1.500-3" stroke="#222" stroke-width="1.200"/><circle cx="6" cy="12" r="1" fill="#fff"/><circle cx="14" cy="12" r="1" fill="#fff"/></svg><span style="left:39px">Android</span></div>
<div class="row" style="top:711px;height:40px;border-bottom:0"><svg viewBox="0 0 20 20" style="top:7px;width:20px"><path d="M5 3l3 8M13 3l-3 8M4 12l8 6M12 12l-7 6" stroke="#222" stroke-width="1.500" fill="none"/></svg><span style="left:36px;top:10px">AngelList</span></div>
<div class="a" style="left:516px;top:346px;width:1px;height:405px;background:#dfdfdf"></div>
<div class="a" style="left:1259px;top:346px;width:1px;height:405px;background:#dfdfdf"></div>
<div class="a" style="left:581px;top:763px;width:1px;height:4px;background:#444"></div>

<!-- filter panel -->
<div class="a" style="left:515px;top:256px;width:745px;height:90px;background:#6c757d;border-radius:0 0 7px 7px"></div>
<div class="lbl" style="left:523px">Search</div>
<div class="lbl" style="left:711px">Size</div>
<div class="lbl" style="left:900px">Animation</div>
<div class="lbl" style="left:1088px">Rotation</div>
<div class="inp" style="left:523px;color:#6c757d;letter-spacing:-.2px">Type here to search</div>
<div class="inp" style="left:711px;width:165px">Default</div>
<div class="inp" style="left:900px">No animation</div>
<div class="inp" style="left:1088px">No rotation</div>

<!-- picker scrollbar -->
<svg class="a" style="left:1274px;top:263px" width="10" height="8"><path d="M0 8h10L5 0z" fill="#888"/></svg>
<div class="a" style="left:1275px;top:285px;width:9px;height:17px;background:#888;border-radius:4px"></div>
<svg class="a" style="left:1274px;top:752px" width="10" height="8"><path d="M0 0h10L5 8z" fill="#888"/></svg>

<!-- footer pill -->
<div class="a" style="left:511px;top:731px;width:753px;height:32px;background:#6c757d;border-radius:6px;color:#fff;font-size:16px;line-height:34px;text-align:center;white-space:nowrap">163 regular icons - 472 brand icons - 1390 solid icons - 2025 total icons</div>

<!-- views / controls -->
<div class="ph" style="left:1314px;top:107px;width:133px"></div>
<svg class="i" style="left:1319px;top:110px"><use href="#vw"/></svg>
<div class="t ph2" style="left:1339px;top:111px;color:#111">Views</div>
<div class="dots" style="left:1373px;top:114px;width:54px"></div>
<svg class="a" style="left:1432px;top:111px" width="12" height="14"><use href="#pin"/></svg>
<div class="search" style="left:1315px;top:132px;width:132px">Search</div>
<div class="box" style="left:1314px;top:155px;width:135px;height:307px"></div>
<div class="a" style="left:1316px;top:157px;width:131px;height:13px;background:#0078d4;color:#fff;font-size:11.5px;line-height:15px;padding-left:1px;box-sizing:border-box;overflow:hidden">view1</div>

<div class="ph" style="left:1453px;top:107px;width:135px"></div>
<svg class="i" style="left:1460px;top:110px"><use href="#ctrl"/></svg>
<div class="t ph2" style="left:1478px;top:111px;color:#111">Controls</div>
<div class="dots" style="left:1526px;top:114px;width:40px"></div>
<svg class="a" style="left:1572px;top:111px" width="12" height="14"><use href="#pin"/></svg>
<div class="search" style="left:1454px;top:132px;width:132px">Search</div>
<div class="box" style="left:1453px;top:155px;width:135px;height:307px"></div>
<svg class="a" style="left:1466px;top:160px" width="12" height="56"><path d="M.5 5v49M0 5h11M0 21h11M0 37h11M0 53h11" stroke="#666" stroke-dasharray="1 1" fill="none"/></svg>
<div class="a" style="left:1475px;top:205px;width:59px;height:16px;background:#dcdcdc"></div>
<svg class="i" style="left:1477px;top:157px"><use href="#txt"/></svg><div class="t" style="left:1497px;top:158px;letter-spacing:-.2px">input1</div>
<svg class="i" style="left:1477px;top:173px"><use href="#col"/></svg><div class="t" style="left:1497px;top:174px;letter-spacing:-.2px">input2</div>
<svg class="i" style="left:1477px;top:189px"><use href="#sea"/></svg><div class="t" style="left:1497px;top:190px;letter-spacing:-.2px">input3</div>
<svg class="i" style="left:1477px;top:205px"><use href="#vid"/></svg><div class="t" style="left:1497px;top:206px;letter-spacing:-.2px">video1</div>

<div class="ph" style="left:1314px;top:465px;width:135px"></div>
<svg class="i" style="left:1319px;top:468px"><use href="#vw"/></svg>
<div class="t ph2" style="left:1339px;top:469px;color:#111">Dialogs</div>
<div class="dots" style="left:1381px;top:472px;width:46px"></div>
<svg class="a" style="left:1432px;top:469px" width="12" height="14"><use href="#pin"/></svg>
<div class="search" style="left:1315px;top:490px;width:132px">Search</div>
<div class="box" style="left:1314px;top:513px;width:135px;height:310px"></div>

<div class="ph" style="left:1453px;top:465px;width:135px"></div>
<svg class="i" style="left:1459px;top:468px"><use href="#frm"/></svg>
<div class="t ph2" style="left:1478px;top:469px;color:#111">Frames</div>
<div class="dots" style="left:1524px;top:472px;width:42px"></div>
<svg class="a" style="left:1572px;top:469px" width="12" height="14"><use href="#pin"/></svg>
<div class="search" style="left:1454px;top:490px;width:132px">Search</div>
<div class="box" style="left:1453px;top:513px;width:135px;height:310px"></div>
</body></html>
